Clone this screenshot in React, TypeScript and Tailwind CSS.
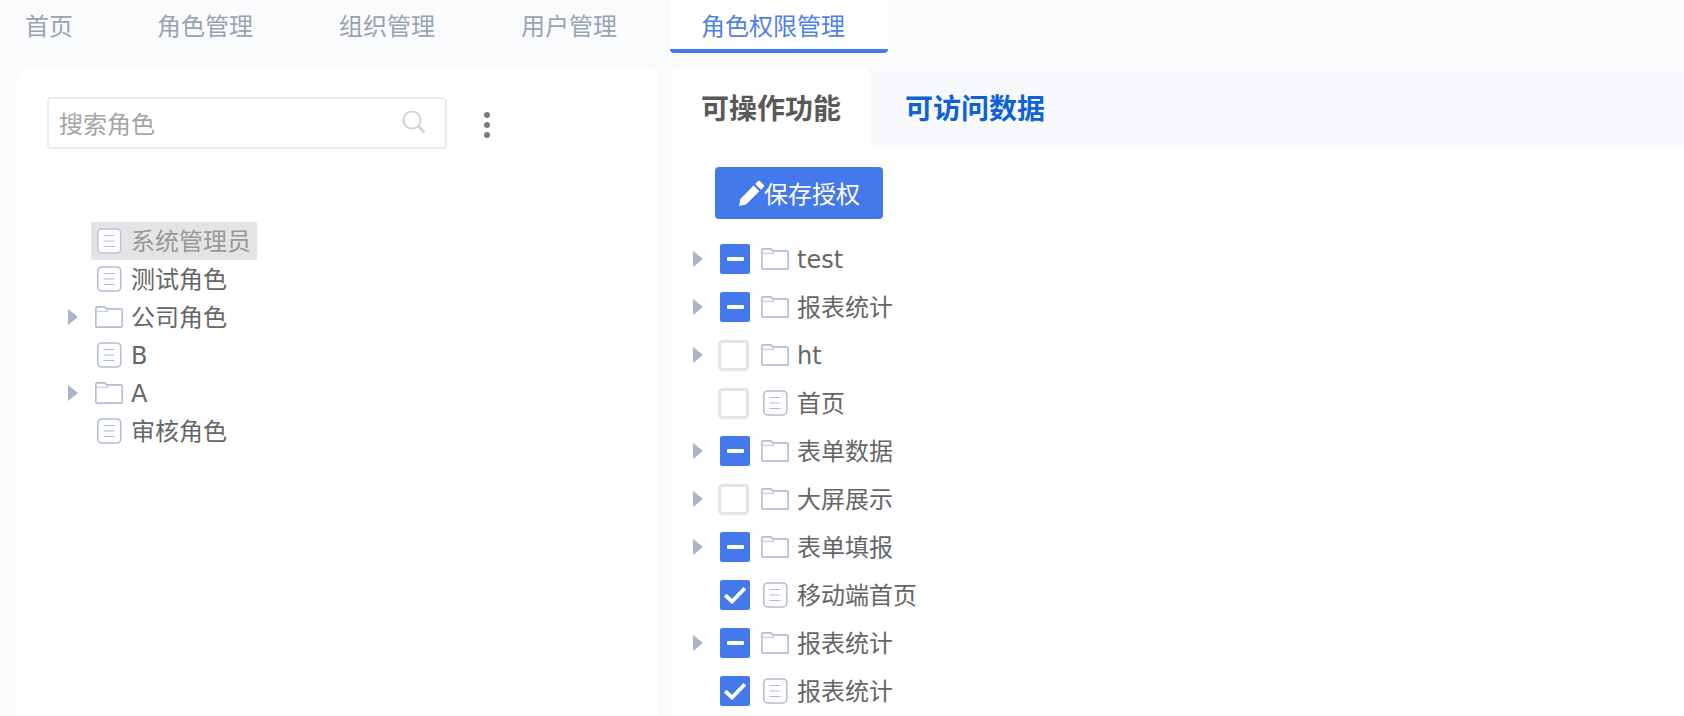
import React from "react";

const FONT = "font-['DejaVu_Sans','Noto_Sans_CJK_SC',sans-serif]";

function Arrow({ hidden }: { hidden?: boolean }) {
  return (
    <span className={`w-[10px] h-[16px] -mr-[1px] shrink-0 ${hidden ? "" : "bg-[#a9b4c6] [clip-path:polygon(0_0,100%_50%,0_100%)]"}`} />
  );
}

function Doc() {
  return (
    <svg width="28" height="26" viewBox="0 0 28 26" fill="none" className="shrink-0">
      <rect x="2.75" y="1" width="23" height="24" rx="4" stroke="#b4bfd4" strokeWidth="1.6" fill="#fff" />
      <path d="M8.5 7.5h11M8.5 13h11M8.5 18.5h11" stroke="#b6bcc8" strokeWidth="1.2" />
    </svg>
  );
}

function Folder() {
  return (
    <svg width="28" height="22" viewBox="0 0 28 22" fill="none" className="shrink-0">
      <path
        d="M.8 4V19.5a1.7 1.7 0 0 0 1.7 1.7h23a1.7 1.7 0 0 0 1.7-1.7V4.5a1.7 1.7 0 0 0-1.7-1.7H12L9.5.8H2.5A1.7 1.7 0 0 0 .8 2.5Z"
        stroke="#b4bfd4"
        strokeWidth="1.7"
        fill="#fff"
      />
      <path d="M1 5.25h11.5L12 2.75" stroke="#bcc5d6" strokeWidth="1.2" />
    </svg>
  );
}

function Check({ state }: { state: "none" | "half" | "full" }) {
  if (state === "none") {
    return <span className="w-[31px] h-[31px] -ml-[2px] mr-[1px] rounded-[4px] border-[3px] border-[#e1e5ee] bg-white shrink-0" />;
  }
  return (
    <span className="w-[30px] h-[30px] rounded-[2px] bg-[#4379ea] flex items-center justify-center shrink-0">
      {state === "half" ? (
        <span className="w-[17px] h-[4px] bg-white rounded-[1px]" />
      ) : (
        <svg width="22" height="18" viewBox="0 0 22 18" fill="none">
          <path d="M1.2 9.2 8 15.5 20.8 2.2" stroke="#fff" strokeWidth="3.8" />
        </svg>
      )}
    </span>
  );
}

const roles = [
  { label: "系统管理员", folder: false, selected: true },
  { label: "测试角色", folder: false },
  { label: "公司角色", folder: true },
  { label: "B", folder: false },
  { label: "A", folder: true },
  { label: "审核角色", folder: false },
];

const perms: { label: string; folder: boolean; state: "none" | "half" | "full" }[] = [
  { label: "test", folder: true, state: "half" },
  { label: "报表统计", folder: true, state: "half" },
  { label: "ht", folder: true, state: "none" },
  { label: "首页", folder: false, state: "none" },
  { label: "表单数据", folder: true, state: "half" },
  { label: "大屏展示", folder: true, state: "none" },
  { label: "表单填报", folder: true, state: "half" },
  { label: "移动端首页", folder: false, state: "full" },
  { label: "报表统计", folder: true, state: "half" },
  { label: "报表统计", folder: false, state: "full" },
];

export default function App() {
  return (
    <div className={`${FONT} h-screen overflow-hidden bg-[#fafbfd] flex flex-col`}>
      <nav className="h-[53px] shrink-0 flex items-start pl-[25px] text-[24px] leading-[55px] text-[#98a3b4]">
        <span className="w-[132px]">首页</span>
        <span className="w-[182px]">角色管理</span>
        <span className="w-[182px]">组织管理</span>
        <span className="w-[149px]">用户管理</span>
        <span className="w-[218px] h-[53px] pl-[31px] bg-white text-[#4f80ec] border-b-[4px] border-[#4379ea] rounded-[4px]">
          角色权限管理
        </span>
      </nav>

      <main className="flex-1 min-h-0 flex gap-[13px] pl-[17px] pt-[16px]">
        <section className="w-[641px] shrink-0 bg-white rounded-t-[8px] pt-[28px]">
          <div className="flex items-center pl-[30px]">
            <div className="w-[400px] h-[52px] rounded-[4px] border-2 border-[#e8ebf1] flex items-center justify-between pl-[10px] pr-[19px]">
              <span className="text-[24px] text-[#a5a5a5] pt-[4px]">搜索角色</span>
              <svg width="24" height="24" viewBox="0 0 24 24" fill="none" className="-mt-[3px]">
                <circle cx="10" cy="10" r="8.5" stroke="#d3d6dc" strokeWidth="2.2" />
                <path d="M16 16l6.5 6.5" stroke="#d3d6dc" strokeWidth="3" />
              </svg>
            </div>
            <div className="ml-[37px] mt-[3px] flex flex-col gap-[4px]">
              <span className="w-[6px] h-[6px] rounded-full bg-[#7b7b7b]" />
              <span className="w-[6px] h-[6px] rounded-full bg-[#7b7b7b]" />
              <span className="w-[6px] h-[6px] rounded-full bg-[#7b7b7b]" />
            </div>
          </div>
          <ul className="mt-[73px] pl-[51px] text-[24px] text-[#666666]">
            {roles.map((r) => (
              <li key={r.label} className="h-[38px] flex items-center">
                <Arrow hidden={!r.folder} />
                <span
                  className={`ml-[14px] h-[38px] flex items-center pl-[4px] pr-[6px] ${r.selected ? "bg-[#e2e2e2] text-[#8d8d8d] opacity-90" : ""}`}
                >
                  {r.folder ? <Folder /> : <Doc />}
                  <span className="ml-[8px] pt-[2px]">{r.label}</span>
                </span>
              </li>
            ))}
          </ul>
        </section>

        <section className="flex-1 min-w-0 bg-white rounded-t-[8px]">
          <div className="h-[78px] flex bg-[#f8f9fc] text-[28px] font-bold">
            <div className="w-[200px] h-full bg-white rounded-t-[8px] pl-[30px] leading-[82px] text-[#595959]">可操作功能</div>
            <div className="pl-[34px] leading-[82px] text-[#0f62d6]">可访问数据</div>
          </div>
          <div className="pl-[44px] pt-[20px]">
            <button className="w-[168px] h-[52px] rounded-[4px] bg-[#4379ea] text-white text-[24px] flex items-center pl-[24px]">
              <svg width="26" height="26" viewBox="0 0 26 26" className="shrink-0">
                <path fill="#fff" d="M18.6 1.5a2 2 0 0 1 2.8 0l3 3a2 2 0 0 1 0 2.8l-2.4 2.4-5.8-5.8ZM14.6 5.5l5.8 5.8L7 24.6 0 26l1.3-7.1Z" />
              </svg>
              <span className="pt-[4px] -ml-[1px]">保存授权</span>
            </button>
          </div>
          <ul className="mt-[16px] pl-[22px] text-[24px] text-[#666666]">
            {perms.map((p, i) => (
              <li key={i} className="h-[48px] flex items-center">
                <Arrow hidden={!p.folder} />
                <span className="ml-[18px] flex items-center">
                  <Check state={p.state} />
                </span>
                <span className="ml-[11px] w-[28px] flex justify-center">{p.folder ? <Folder /> : <Doc />}</span>
                <span className="ml-[8px] pt-[2px]">{p.label}</span>
              </li>
            ))}
          </ul>
        </section>
      </main>
    </div>
  );
}
